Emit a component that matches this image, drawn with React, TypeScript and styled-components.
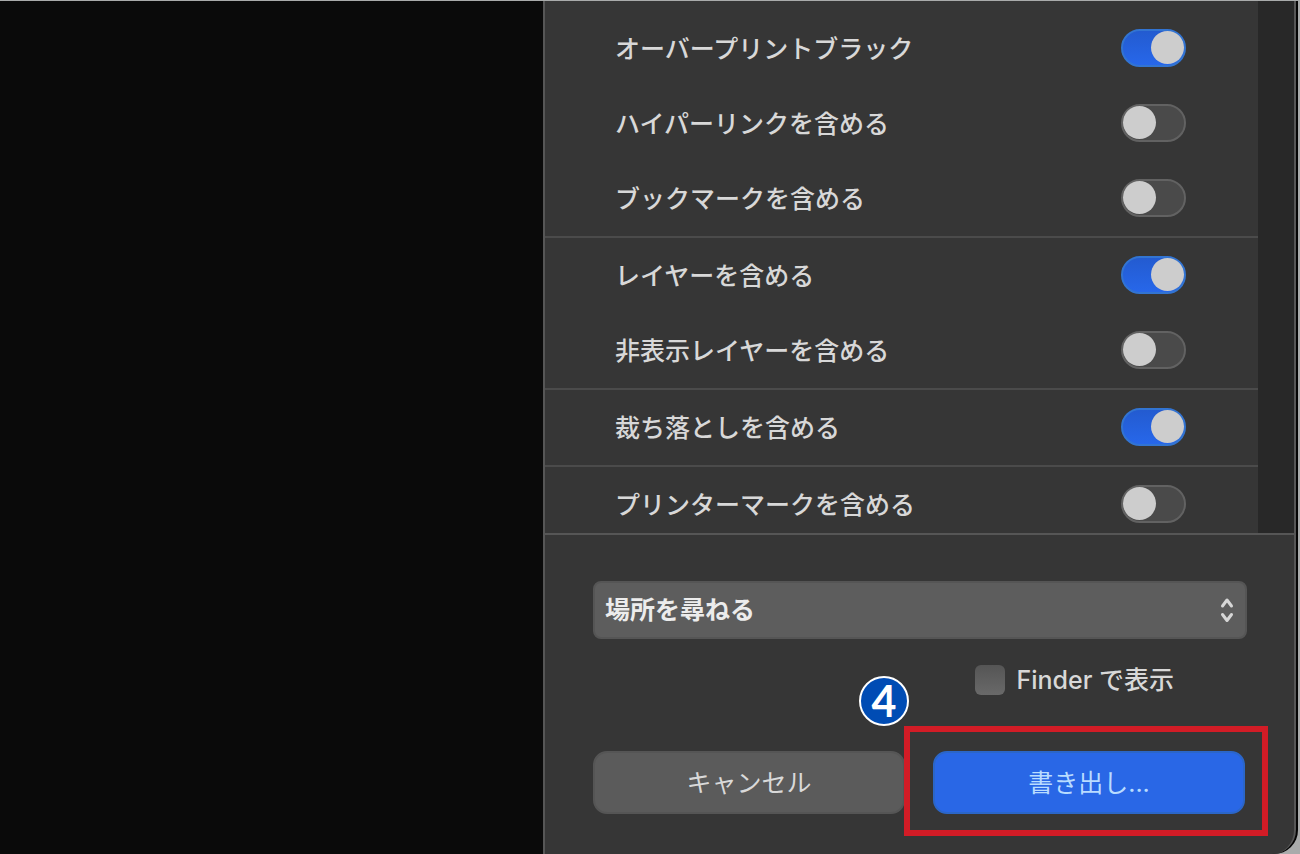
import React, { useState } from "react";
import styled, { createGlobalStyle } from "styled-components";

const GlobalStyle = createGlobalStyle`
  *, *::before, *::after { box-sizing: border-box; }
  body {
    margin: 0;
    background: #a9abab;
    color: #d8d8d8;
    font-family: "Inter", "Noto Sans CJK JP", sans-serif;
    font-size: 25px;
    font-weight: 500;
    line-height: 36px;
  }
  button, select, input { font: inherit; color: inherit; margin: 0; }
`;

const Screen = styled.div`
  display: flex;
  height: 100vh;
  min-height: 640px;
  border-top: 1px solid #a9abab;
  overflow: hidden;
`;

const Preview = styled.aside`
  flex: 1;
  background: #0a0a0a;
`;

const Backing = styled.div`
  flex: 0 0 58%;
  display: flex;
  padding-right: 1px;
  margin-right: 3px;
`;

const Dialog = styled.form`
  flex: 1;
  min-width: 0;
  display: flex;
  flex-direction: column;
  background: #363636;
  border: solid #565656;
  border-width: 0 2px 0 2px;
  border-bottom-right-radius: 24px;
  box-shadow: 2px 0 0 #050505;
`;

const Scroller = styled.div`
  flex: 1;
  min-height: 0;
  display: flex;
  overflow: hidden;
`;

const Options = styled.div`
  flex: 1;
  padding-top: 10px;
`;

const Track = styled.div`
  width: 36px;
  background: #282828;
`;

const Group = styled.div`
  & + & {
    border-top: 2px solid #4b4b4b;
  }
`;

const OptionRow = styled.label`
  display: flex;
  align-items: center;
  justify-content: space-between;
  height: 75px;
  padding: 0 72px 0 70px;
`;

const Toggle = styled.input`
  appearance: none;
  display: flex;
  align-items: center;
  width: 65px;
  height: 38px;
  padding: 0;
  border: 2px solid #626262;
  border-radius: 19px;
  background: #4a4a4a;

  ${OptionRow} > & {
    margin-bottom: 2px;
  }

  &::before {
    content: "";
    width: 33px;
    height: 33px;
    border-radius: 50%;
    background: #cdcdcd;
  }

  &:checked {
    justify-content: flex-end;
    border-color: #3274d2;
    background: linear-gradient(#235bd0, #2767ea);
  }
`;

const Footer = styled.div`
  padding: 46px 47px 40px 48px;
  border-top: 2px solid #565656;
`;

const SelectBox = styled.div`
  display: grid;
  align-items: center;

  & > * {
    grid-area: 1 / 1;
  }
`;

const Select = styled.select`
  appearance: none;
  width: 100%;
  height: 58px;
  padding: 0 48px 0 10px;
  border: 2px solid #555555;
  border-radius: 8px;
  background: #5d5d5d;
  color: #ececec;
  font-weight: 600;
`;

const Chevrons = styled.svg`
  justify-self: end;
  margin-right: 13px;
  pointer-events: none;
`;

const CheckRow = styled.label`
  display: flex;
  align-items: center;
  gap: 11px;
  width: fit-content;
  height: 30px;
  margin: 26px 73px 56px auto;
`;

const CheckBox = styled.input`
  appearance: none;
  width: 30px;
  height: 30px;
  border-radius: 6px;
  background: linear-gradient(#555555, #696969);

  &:checked {
    background: #2a67e6;
  }
`;

const Actions = styled.div`
  display: grid;
  grid-template-columns: 1fr 1fr;
  gap: 28px;
  padding-right: 2px;
`;

const Button = styled.button<{ $primary?: boolean }>`
  width: 100%;
  height: 63px;
  padding: 0;
  border: 2px solid ${(p) => (p.$primary ? "#2b66c8" : "#555555")};
  border-radius: 14px;
  background: ${(p) => (p.$primary ? "#2967e6" : "#5b5b5b")};
  color: ${(p) => (p.$primary ? "#b9dcff" : "#d9d9d9")};
  font-weight: 400;
`;

const Highlighted = styled.div`
  position: relative;
`;

const Frame = styled.div`
  position: absolute;
  inset: -25px -23px -22px -29px;
  border: 6px solid #d21c26;
  pointer-events: none;
`;

const StepBadge = styled.span`
  position: absolute;
  top: -75px;
  left: -74px;
  display: flex;
  align-items: center;
  justify-content: center;
  width: 50px;
  height: 50px;
  border: 2px solid #ffffff;
  border-radius: 50%;
  background: #004cb4;
  color: #ffffff;
  font-family: "Lato", sans-serif;
  font-size: 43px;
  font-weight: 700;
`;

const groups = [
  [
    { label: "オーバープリントブラック", on: true },
    { label: "ハイパーリンクを含める", on: false },
    { label: "ブックマークを含める", on: false },
  ],
  [
    { label: "レイヤーを含める", on: true },
    { label: "非表示レイヤーを含める", on: false },
  ],
  [{ label: "裁ち落としを含める", on: true }],
  [{ label: "プリンターマークを含める", on: false }],
];

function Option({ label, on }: { label: string; on: boolean }) {
  const [checked, setChecked] = useState(on);
  return (
    <OptionRow>
      {label}
      <Toggle
        type="checkbox"
        role="switch"
        checked={checked}
        onChange={(e) => setChecked(e.target.checked)}
      />
    </OptionRow>
  );
}

export default function App() {
  return (
    <>
      <GlobalStyle />
      <Screen>
        <Preview />
        <Backing>
          <Dialog onSubmit={(e) => e.preventDefault()}>
            <Scroller>
              <Options>
                {groups.map((group, i) => (
                  <Group key={i}>
                    {group.map((o) => (
                      <Option key={o.label} {...o} />
                    ))}
                  </Group>
                ))}
              </Options>
              <Track />
            </Scroller>
            <Footer>
              <SelectBox>
                <Select aria-label="書き出し先">
                  <option>場所を尋ねる</option>
                </Select>
                <Chevrons
                  width="14"
                  height="28"
                  viewBox="0 0 14 28"
                  fill="none"
                  stroke="#d6d6d6"
                  strokeWidth="3"
                  strokeLinecap="round"
                  strokeLinejoin="round"
                >
                  <path d="M2.5 10 L7 4 L11.5 10" />
                  <path d="M2.5 18.5 L7 24.5 L11.5 18.5" />
                </Chevrons>
              </SelectBox>
              <CheckRow>
                <CheckBox type="checkbox" />
                Finder で表示
              </CheckRow>
              <Actions>
                <Button type="button">キャンセル</Button>
                <Highlighted>
                  <Button type="submit" $primary>
                    書き出し...
                  </Button>
                  <Frame />
                  <StepBadge>4</StepBadge>
                </Highlighted>
              </Actions>
            </Footer>
          </Dialog>
        </Backing>
      </Screen>
    </>
  );
}
